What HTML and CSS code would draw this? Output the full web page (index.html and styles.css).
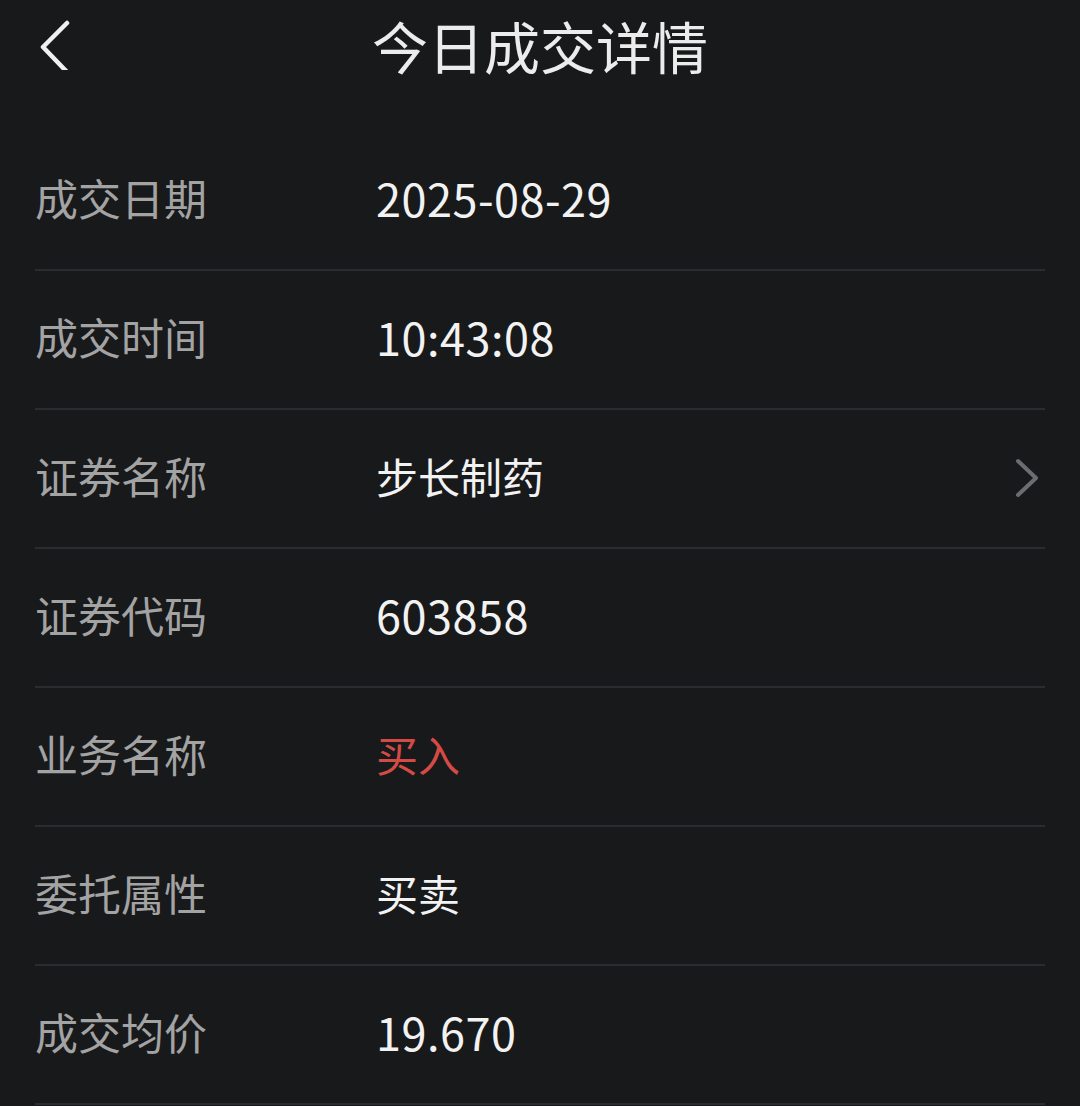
FILE: index.html
```html
<!DOCTYPE html>
<html lang="zh-CN">
<head>
    <meta charset="UTF-8">
    <meta name="viewport" content="width=device-width, initial-scale=1.0">
    <title>今日成交详情</title>
    <link rel="stylesheet" href="styles.css">
</head>
<body>
    <div class="header">
        <a class="back" href="#">
            <svg width="40" height="60" viewBox="0 0 40 60">
                <polyline points="31,13 7,37 31,62" fill="none" stroke="#f0f0f0" stroke-width="4.5" stroke-linecap="round" stroke-linejoin="round"/>
            </svg>
        </a>
        <h1>今日成交详情</h1>
    </div>

    <div class="list">
        <div class="row">
            <span class="label">成交日期</span>
            <span class="value num">2025-08-29</span>
        </div>
        <div class="row">
            <span class="label">成交时间</span>
            <span class="value num">10:43:08</span>
        </div>
        <div class="row">
            <span class="label">证券名称</span>
            <span class="value">步长制药</span>
            <svg class="arrow" width="30" height="44" viewBox="0 0 30 44">
                <polyline points="6,5 24,22 6,39" fill="none" stroke="#6b6d73" stroke-width="4" stroke-linecap="round" stroke-linejoin="round"/>
            </svg>
        </div>
        <div class="row">
            <span class="label">证券代码</span>
            <span class="value num">603858</span>
        </div>
        <div class="row">
            <span class="label">业务名称</span>
            <span class="value buy">买入</span>
        </div>
        <div class="row">
            <span class="label">委托属性</span>
            <span class="value">买卖</span>
        </div>
        <div class="row">
            <span class="label">成交均价</span>
            <span class="value num">19.670</span>
        </div>
    </div>
</body>
</html>
```

FILE: styles.css
```css
body {
    margin: 0;
    background-color: #18191b;
    font-family: "Noto Sans CJK SC", "Noto Sans", sans-serif;
    color: #f0f0f0;
}
.header {
    position: relative;
    height: 96px;
    display: flex;
    align-items: center;
    justify-content: center;
}
.back {
    position: absolute;
    left: 36px;
    top: 10px;
}
.header h1 {
    margin: 0 0 6px 0;
    font-size: 56px;
    font-weight: 400;
    line-height: 1.2;
    color: #ececec;
}
.list {
    padding: 36px 35px 0 35px;
}
.row {
    box-sizing: border-box;
    height: 139px;
    padding-bottom: 5px;
    display: flex;
    align-items: center;
    border-bottom: 2px solid #2b2c2f;
}
.label {
    width: 341px;
    font-size: 43px;
    line-height: 1.2;
    color: #a3a3a3;
}
.value {
    flex: 1;
    font-size: 42px;
    line-height: 1.2;
    color: #f2f2f2;
}
.value.num {
    font-size: 45px;
    letter-spacing: 0.5px;
}
.value.buy {
    color: #d44b45;
}
.arrow {
    margin-right: 3px;
    margin-top: 4px;
}
```
